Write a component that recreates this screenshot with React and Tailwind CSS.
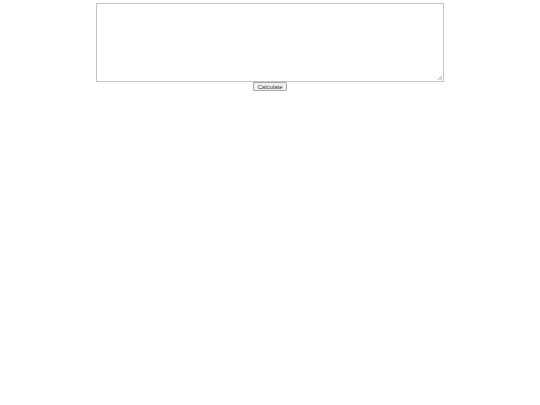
export default function App() {
    return (
        <div className="w-full flex flex-col items-center pt-[3px] font-['Liberation_Sans',Arial,sans-serif]">
            <div className="relative">
                <textarea className="block w-[348px] h-[79px] border border-[#c4c4c4] bg-white resize-none" />
                {/* tiny resize grip */}
                <svg className="absolute right-[2px] bottom-[2px]" width="4" height="4" viewBox="0 0 4 4">
                    <path d="M4 0 L0 4 M4 2 L2 4" stroke="#999" strokeWidth="0.8" />
                </svg>
            </div>
            <button className="h-[9px] w-[34px] flex items-center justify-center text-[6px] leading-none text-[#333] bg-[#f0f0f0] border border-[#a8a8a8] rounded-[1px]">
                Calculate
            </button>
        </div>
    );
}
